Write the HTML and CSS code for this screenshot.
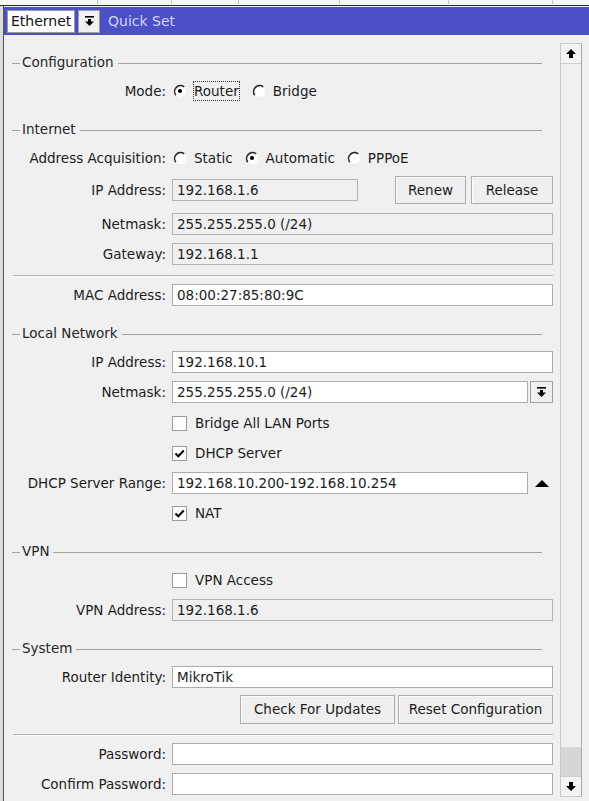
FILE: index.html
```html
<!DOCTYPE html>
<html>
<head>
<meta charset="utf-8">
<link rel="stylesheet" href="styles.css">
</head>
<body>
<div class="topstrip">
  <span class="tick t1"></span><span class="tick t2"></span><span class="tick t3"></span><span class="tick t4"></span><span class="tick t5"></span><span class="tick t6"></span>
</div>
<div class="window">
  <div class="titlebar">
    <div class="iface">Ethernet</div>
    <div class="ddbtn"><svg width="9" height="10" viewBox="0 0 9 10"><rect x="0" y="0" width="9" height="1.6" fill="#000"/><rect x="3" y="3" width="3" height="3" fill="#000"/><polygon points="0,5.5 9,5.5 4.5,10" fill="#000"/></svg></div>
    <div class="title">Quick Set</div>
  </div>
  <div class="content">
    <div class="panel">
      <div class="heading first"><span>Configuration</span></div>
      <div class="row">
        <div class="lbl">Mode:</div>
        <div class="field radios">
          <span class="radio"><svg class="rb" width="14" height="14" viewBox="0 0 14 14"><circle cx="7" cy="7" r="6" fill="#fff"/><path d="M2.8 11.2 A6 6 0 0 1 11.2 2.8" fill="none" stroke="#2a2a2a" stroke-width="1.6"/><circle cx="7" cy="7" r="2.1" fill="#000"/></svg><span class="focus">Router</span></span>
          <span class="radio"><svg class="rb" width="14" height="14" viewBox="0 0 14 14"><circle cx="7" cy="7" r="6" fill="#fff"/><path d="M2.8 11.2 A6 6 0 0 1 11.2 2.8" fill="none" stroke="#2a2a2a" stroke-width="1.6"/></svg><span>Bridge</span></span>
        </div>
      </div>

      <div class="heading"><span>Internet</span></div>
      <div class="row">
        <div class="lbl">Address Acquisition:</div>
        <div class="field radios">
          <span class="radio"><svg class="rb" width="14" height="14" viewBox="0 0 14 14"><circle cx="7" cy="7" r="6" fill="#fff"/><path d="M2.8 11.2 A6 6 0 0 1 11.2 2.8" fill="none" stroke="#2a2a2a" stroke-width="1.6"/></svg><span>Static</span></span>
          <span class="radio"><svg class="rb" width="14" height="14" viewBox="0 0 14 14"><circle cx="7" cy="7" r="6" fill="#fff"/><path d="M2.8 11.2 A6 6 0 0 1 11.2 2.8" fill="none" stroke="#2a2a2a" stroke-width="1.6"/><circle cx="7" cy="7" r="2.1" fill="#000"/></svg><span>Automatic</span></span>
          <span class="radio"><svg class="rb" width="14" height="14" viewBox="0 0 14 14"><circle cx="7" cy="7" r="6" fill="#fff"/><path d="M2.8 11.2 A6 6 0 0 1 11.2 2.8" fill="none" stroke="#2a2a2a" stroke-width="1.6"/></svg><span>PPPoE</span></span>
        </div>
      </div>
      <div class="row r-ip">
        <div class="lbl">IP Address:</div>
        <div class="field split">
          <input class="inp ro short" type="text" value="192.168.1.6" readonly>
          <button class="btn renew">Renew</button>
          <button class="btn release">Release</button>
        </div>
      </div>
      <div class="row r-gap4">
        <div class="lbl">Netmask:</div>
        <div class="field"><input class="inp ro" type="text" value="255.255.255.0 (/24)" readonly></div>
      </div>
      <div class="row">
        <div class="lbl">Gateway:</div>
        <div class="field"><input class="inp ro" type="text" value="192.168.1.1" readonly></div>
      </div>
      <div class="sep"></div>
      <div class="row r-aftersep">
        <div class="lbl">MAC Address:</div>
        <div class="field"><input class="inp" type="text" value="08:00:27:85:80:9C"></div>
      </div>

      <div class="heading"><span>Local Network</span></div>
      <div class="row">
        <div class="lbl">IP Address:</div>
        <div class="field"><input class="inp" type="text" value="192.168.10.1"></div>
      </div>
      <div class="row">
        <div class="lbl">Netmask:</div>
        <div class="field combo">
          <input class="inp" type="text" value="255.255.255.0 (/24)">
          <div class="ddbtn small"><svg width="9" height="10" viewBox="0 0 9 10"><rect x="0" y="0" width="9" height="1.6" fill="#000"/><rect x="3" y="3" width="3" height="3" fill="#000"/><polygon points="0,5.5 9,5.5 4.5,10" fill="#000"/></svg></div>
        </div>
      </div>
      <div class="row r-gap1">
        <div class="lbl"></div>
        <div class="field"><span class="check"><span class="cb"></span><span>Bridge All LAN Ports</span></span></div>
      </div>
      <div class="row">
        <div class="lbl"></div>
        <div class="field"><span class="check"><span class="cb"><svg width="13" height="13" viewBox="0 0 13 13"><polyline points="2.5,6.5 5.3,9.3 10.8,3.5" fill="none" stroke="#000" stroke-width="2"/></svg></span><span>DHCP Server</span></span></div>
      </div>
      <div class="row">
        <div class="lbl">DHCP Server Range:</div>
        <div class="field combo">
          <input class="inp" type="text" value="192.168.10.200-192.168.10.254">
          <span class="uptri"><svg width="14" height="7" viewBox="0 0 14 7"><polygon points="7,0 14,7 0,7" fill="#000"/></svg></span>
        </div>
      </div>
      <div class="row">
        <div class="lbl"></div>
        <div class="field"><span class="check"><span class="cb"><svg width="13" height="13" viewBox="0 0 13 13"><polyline points="2.5,6.5 5.3,9.3 10.8,3.5" fill="none" stroke="#000" stroke-width="2"/></svg></span><span>NAT</span></span></div>
      </div>

      <div class="heading"><span>VPN</span></div>
      <div class="row">
        <div class="lbl"></div>
        <div class="field"><span class="check"><span class="cb"></span><span>VPN Access</span></span></div>
      </div>
      <div class="row">
        <div class="lbl">VPN Address:</div>
        <div class="field"><input class="inp ro" type="text" value="192.168.1.6" readonly></div>
      </div>

      <div class="heading"><span>System</span></div>
      <div class="row">
        <div class="lbl">Router Identity:</div>
        <div class="field"><input class="inp" type="text" value="MikroTik"></div>
      </div>
      <div class="row r-btns">
        <div class="lbl"></div>
        <div class="field actions">
          <button class="btn wide">Check For Updates</button>
          <button class="btn wide">Reset Configuration</button>
        </div>
      </div>
      <div class="sep sep2"></div>
      <div class="row r-aftersep">
        <div class="lbl">Password:</div>
        <div class="field"><input class="inp" type="text" value=""></div>
      </div>
      <div class="row">
        <div class="lbl">Confirm Password:</div>
        <div class="field"><input class="inp" type="text" value=""></div>
      </div>
    </div>
    <div class="scrollbar">
      <div class="sb-btn"><svg width="10" height="9" viewBox="0 0 10 9"><polygon points="5,0 10,5 7,5 7,9 3,9 3,5 0,5" fill="#000"/></svg></div>
      <div class="sb-track"><div class="sb-thumb"></div></div>
      <div class="sb-btn"><svg width="10" height="9" viewBox="0 0 10 9"><polygon points="5,9 10,4 7,4 7,0 3,0 3,4 0,4" fill="#000"/></svg></div>
    </div>
    <div class="edge"></div>
  </div>
</div>
</body>
</html>
```

FILE: styles.css
```css
* { box-sizing: border-box; }
html, body { margin: 0; padding: 0; }
body {
  width: 589px;
  height: 801px;
  overflow: hidden;
  background: #dcdcdc;
  font-family: "DejaVu Sans", sans-serif;
  font-size: 13.5px;
  color: #1c1c1c;
}
.topstrip {
  height: 6px;
  background: #f7f7f7;
  border-bottom: 1px solid #2b2b2b;
  display: flex;
}
.tick { height: 4px; border-right: 1px solid #c4c4c4; }
.t1 { width: 98px; }
.t2 { width: 74px; }
.t3 { width: 67px; }
.t4 { width: 101px; }
.t5 { width: 109px; }
.t6 { width: 104px; }

.window {
  margin-left: 3px;
  border-left: 1px solid #555;
  height: 795px;
  background: #f0f0f0;
  padding-top: 1px;
  display: flex;
  flex-direction: column;
}
.titlebar {
  height: 28px;
  flex: none;
  background: #4b4fc8;
  display: flex;
  align-items: center;
}
.iface {
  margin-left: 3px;
  width: 68px;
  height: 23px;
  background: #fff;
  border: 1px solid #9a9a9a;
  padding-left: 3px;
  line-height: 21px;
  font-size: 14px;
  color: #111;
}
.ddbtn {
  margin-left: 3px;
  width: 22px;
  height: 23px;
  background: #f0f0f0;
  border: 1px solid #9f9f9f;
  display: flex;
  align-items: center;
  justify-content: center;
}
.ddbtn.small { margin-left: 2px; width: 23px; height: 22px; flex: none; }
.title {
  margin-left: 8px;
  color: #d2d6f6;
  font-size: 14px;
}

.content { flex: 1; display: flex; }
.panel {
  width: 554px;
  flex: none;
  padding-right: 5px;
  padding-top: 17px;
}

.heading {
  height: 20px;
  margin-top: 13px;
  margin-bottom: 4px;
  display: flex;
  align-items: center;
  color: #262626;
}
.heading.first { margin-top: 0; }
.heading::before {
  content: "";
  width: 8px;
  margin-left: 8px;
  margin-right: 2px;
  margin-top: 3px;
  border-top: 1px solid #a3a3a3;
}
.heading::after {
  content: "";
  flex: 1;
  margin-left: 4px;
  margin-right: 11px;
  margin-top: 3px;
  border-top: 1px solid #a3a3a3;
}

.row {
  height: 30px;
  display: grid;
  grid-template-columns: 162px 1fr;
  column-gap: 6px;
  align-items: center;
}
.r-ip { margin-top: 2px; }
.r-gap4 { margin-top: 4px; }
.r-gap1 { margin-top: 1px; }
.r-aftersep { margin-top: 3px; }
.r-btns { margin-top: 2px; }

.lbl { text-align: right; white-space: nowrap; }
.field { display: flex; align-items: center; min-width: 0; }

.sep {
  margin-top: 6px;
  margin-left: 9px;
  height: 2px;
  border-top: 1px solid #b3b3b3;
  border-bottom: 1px solid #fbfbfb;
}
.sep2 { margin-top: 10px; }

.inp {
  flex: 1;
  min-width: 0;
  width: 100%;
  height: 22px;
  margin: 0;
  padding: 0 4px;
  border: 1px solid #acacac;
  background: #fff;
  font: inherit;
  color: #1c1c1c;
  outline: none;
}
.inp.ro { background: #f0f0f0; border-color: #b4b4b4; }
.inp.short { flex: none; width: 186px; }

.split { justify-content: flex-start; }
.btn {
  height: 28px;
  margin: 0;
  padding: 0;
  background: #efefef;
  border: 1px solid #adadad;
  box-shadow: inset 1px 1px 0 #fbfbfb;
  font: inherit;
  color: #1c1c1c;
}
.renew { margin-left: auto; width: 71px; }
.release { margin-left: 5px; width: 82px; }
.actions { justify-content: flex-end; gap: 3px; }
.btn.wide { width: 155px; height: 29px; }

.combo { gap: 0; }
.uptri { width: 25px; flex: none; display: flex; justify-content: flex-end; padding-right: 4px; padding-top: 1px; }

.radios { gap: 12px; padding-left: 1px; }
.radio { display: inline-flex; align-items: center; gap: 7px; }
.radio .rb { flex: none; }
.focus { border: 1px dotted #333; margin-left: -1px; line-height: 18px; }

.check { display: inline-flex; align-items: center; gap: 8px; }
.cb {
  width: 15px;
  height: 15px;
  background: #fff;
  border: 1px solid #9c9c9c;
  display: flex;
  align-items: center;
  justify-content: center;
}

.scrollbar {
  margin-left: 2px;
  margin-top: 8px;
  margin-bottom: 4px;
  width: 22px;
  flex: none;
  border-left: 1px solid #c9c9c9;
  border-right: 1px solid #a9a9a9;
  border-top: 1px solid #c9c9c9;
  border-bottom: 1px solid #c9c9c9;
  display: flex;
  flex-direction: column;
  background: #f0f0f0;
}
.sb-btn {
  height: 20px;
  flex: none;
  display: flex;
  align-items: center;
  justify-content: center;
  background: #f3f3f3;
  border-bottom: 1px solid #cfcfcf;
}
.sb-btn:last-child { border-bottom: none; border-top: 1px solid #cfcfcf; }
.sb-track { flex: 1; display: flex; flex-direction: column; justify-content: flex-end; }
.sb-thumb { height: 29px; background: #d6d6d6; }
.edge { flex: 1; background: #f0f0f0; }
```
